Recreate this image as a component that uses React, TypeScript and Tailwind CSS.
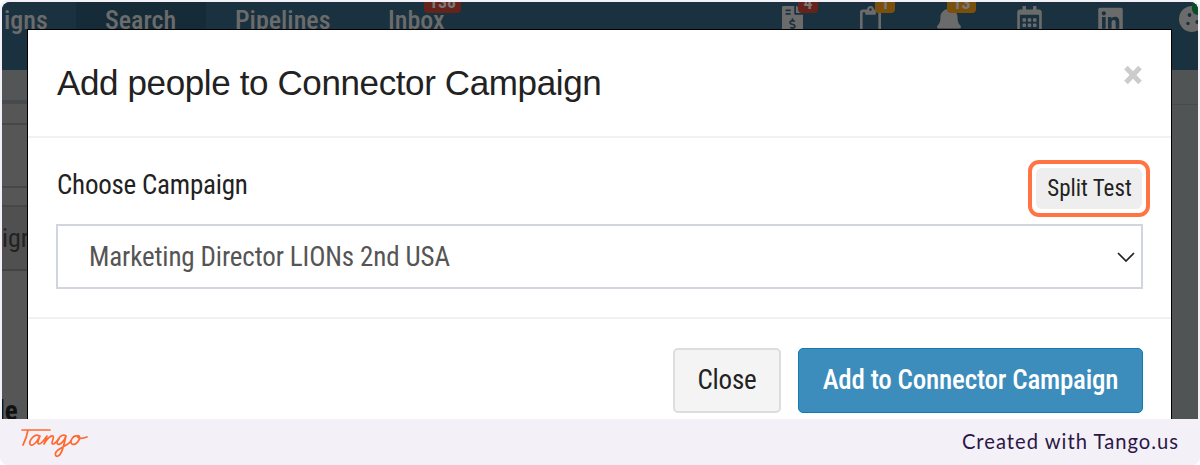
import { FaBell, FaFileInvoiceDollar, FaLinkedin, FaRegCalendarAlt, FaRegClipboard } from 'react-icons/fa';

const condensed = "font-['Roboto_Condensed','Roboto',sans-serif] [font-stretch:75%]";

const navLinks = [
  { label: 'igns', className: 'w-[74px] pl-0.5' },
  { label: 'Search', className: 'w-[130px] pl-[29px] bg-[#152b38]' },
  { label: 'Pipelines', className: 'w-[153px] pl-[29px]' },
  { label: 'Inbox', className: 'w-[120px] pl-[29px]', badge: '138' },
];

function NavBar() {
  return (
    <nav className="relative flex h-[68px] shrink-0 bg-[#1a3140] text-[#6b6b6b]">
      {navLinks.map((link) => (
        <div key={link.label} className={`relative h-full pt-0.5 text-[26px] leading-8 font-medium whitespace-nowrap ${link.className}`}>
          {link.label}
          {link.badge && (
            <span className="absolute top-[-11px] left-[65px] flex h-[22px] w-[37px] items-center justify-center rounded bg-[#66231b] text-[18px] font-bold text-[#787878]">
              {link.badge}
            </span>
          )}
        </div>
      ))}
      <FaFileInvoiceDollar className="absolute top-1 left-[780px] h-[28px] w-[21px]" />
      <FaRegClipboard className="absolute top-1 left-[858px] h-[28px] w-[21px]" />
      <FaBell className="absolute top-1 left-[935px] h-[28px] w-[24px]" />
      <FaRegCalendarAlt className="absolute top-1 left-[1015px] h-[28px] w-[25px]" />
      <FaLinkedin className="absolute top-[4px] left-[1096px] h-[28px] w-[25px]" />
      <svg viewBox="0 0 26 26" className="absolute top-1 left-[1177px] size-[26px]">
        <circle cx="13" cy="13" r="13" fill="currentColor" />
        <g fill="#1a3140">
          <circle cx="10.5" cy="9" r="1.9" />
          <circle cx="9" cy="17.5" r="1.7" />
          <circle cx="18.3" cy="16" r="1.9" />
        </g>
      </svg>
      <span className="absolute top-[-11px] left-[796px] flex h-[22px] w-[20px] items-center justify-center rounded bg-[#66231b] text-[18px] font-bold text-[#787878]">
        4
      </span>
      <span className="absolute top-[-11px] left-[873px] flex h-[22px] w-[20px] items-center justify-center rounded bg-[#7b500b] text-[18px] font-bold text-[#787878]">
        1
      </span>
      <span className="absolute top-[-11px] left-[945px] flex h-[22px] w-[29px] items-center justify-center rounded bg-[#7b500b] text-[18px] font-bold text-[#787878]">
        13
      </span>
      <span className="absolute top-[-11px] left-[1190px] h-[24px] w-[20px] rounded-md bg-[#0b4b25]" />
    </nav>
  );
}

function Modal() {
  return (
    <div className="absolute top-[27px] left-[25px] flex h-[400px] w-[1145px] flex-col border border-black bg-white">
      <header className="flex h-[108px] shrink-0 items-start justify-between border-b-2 border-[#f1f1f1] pr-[29px] pl-[29px]">
        <h4 className="pt-[31px] font-['Liberation_Sans',Arial,sans-serif] text-[35px] leading-[44px] tracking-[-0.38px] whitespace-nowrap text-[#222]">
          Add people to Connector Campaign
        </h4>
        <button className="mt-[34px] flex h-[22px] w-[18px] items-center justify-center text-[#ccc]">
          <svg viewBox="0 0 18 20" className="h-5 w-[18px]" fill="none" stroke="currentColor" strokeWidth="5">
            <path d="M2 2.5 16 17.5M16 2.5 2 17.5" />
          </svg>
        </button>
      </header>

      <div className="flex h-[181px] shrink-0 flex-col border-b-2 border-[#f1f1f1] px-[28px]">
        <div className="flex h-[86px] items-start justify-between">
          <label className="pt-[31px] pl-px text-[27px] leading-8 tracking-[-0.23px] whitespace-nowrap text-[#222]">Choose Campaign</label>
          <div className="mt-[22px] mr-[-7px] flex h-[57px] w-[122px] rounded-[11px] border-4 border-[#ff7442] p-1">
            <button className="flex-1 rounded-md bg-[#eee] pl-px text-[23px] leading-8 whitespace-nowrap text-[#222]">Split Test</button>
          </div>
        </div>
        <div className="flex h-[65px] shrink-0 items-center justify-between border-2 border-[#d0d5e0] pr-[6px] pl-[31px]">
          <span className="text-[27px] leading-8 tracking-[-0.13px] whitespace-nowrap text-[#555]">Marketing Director LIONs 2nd USA</span>
          <svg viewBox="0 0 18 10" className="h-[10px] w-[18px]" fill="none" stroke="#222" strokeWidth="1.7">
            <path d="M1 1 9 9l8-8" />
          </svg>
        </div>
      </div>

      <footer className="flex gap-[17px] self-end pt-[29px] pr-[28px]">
        <button className="h-[65px] w-[108px] rounded-[5px] border-2 border-[#ddd] bg-[#f4f4f4] text-[27px] tracking-[-0.2px] whitespace-nowrap text-[#222]">
          Close
        </button>
        <button className="h-[65px] w-[345px] rounded-[5px] border border-[#0f7db3] bg-[#3c8dbc] text-[27px] font-medium tracking-[-0.2px] whitespace-nowrap text-white">
          Add to Connector Campaign
        </button>
      </footer>
    </div>
  );
}

export default function App() {
  return (
    <div className="h-[465px] w-[1200px] bg-white">
      <div className="flex h-full flex-col overflow-hidden rounded-lg bg-[#f3f1f7] pt-0.5">
        <div className={`relative mx-0.5 flex h-[417px] shrink-0 flex-col overflow-hidden rounded-t-lg bg-[#565656] ${condensed}`}>
          <NavBar />
          <div className="flex flex-1">
            <div className="flex w-[25px] flex-col overflow-hidden text-[26px] leading-8 text-[#222]">
              <div className="h-[34px] shrink-0 border-b-4 border-[#464b4e] bg-[#535556]" />
              <div className="h-[21px] shrink-0 border-b-2 border-[#454749]" />
              <div className="h-[63px] shrink-0 border-b-2 border-[#454749]" />
              <div className="h-[19px] shrink-0 border-b-2 border-[#454749]" />
              <div className="h-[64px] shrink-0 border-b-2 border-[#434343] bg-[#505050] pt-[15px]">ign</div>
              <div className="-ml-1 h-[140px] shrink-0 pt-[124px] text-[27px] font-bold text-[#111]">le</div>
            </div>
            <div className="ml-auto w-[27px] bg-[#505455]">
              <div className="h-[35px] border-b border-[#484b4d]" />
            </div>
          </div>
          <Modal />
        </div>

        <div className="flex flex-1 items-center justify-between pr-[21px] pl-[20px]">
          <svg viewBox="0 0 68 32" className="mt-0.5 h-8 w-[68px]" fill="none" stroke="#ff6a32" strokeWidth="1.7" strokeLinecap="round" strokeLinejoin="round">
            <path d="M2 3h28M8 3C7 9 5 14 3 18" />
            <path d="M19 9c-4-3-10 4-9 8 1 3 6 0 9-6l1-2c-2 5-3 8-1 8 3 0 6-6 8-8-1 3-2 6-3 8 3-5 7-9 9-8s-3 8 0 8c2 0 4-3 6-5" />
            <path d="M46 9c-4-3-9 3-9 7 1 4 7-1 9-7-2 8-4 19-8 20-3 1-4-3 0-6s10-5 13-9" />
            <path d="M57 9c-4-1-8 6-5 8 4 2 9-5 7-8-3-2-3 5 8 1" />
          </svg>
          <span className="mb-0.5 font-['Lato',sans-serif] text-[20.2px] tracking-[1px] whitespace-nowrap text-[#2c1746]">Created with Tango.us</span>
        </div>
      </div>
    </div>
  );
}
